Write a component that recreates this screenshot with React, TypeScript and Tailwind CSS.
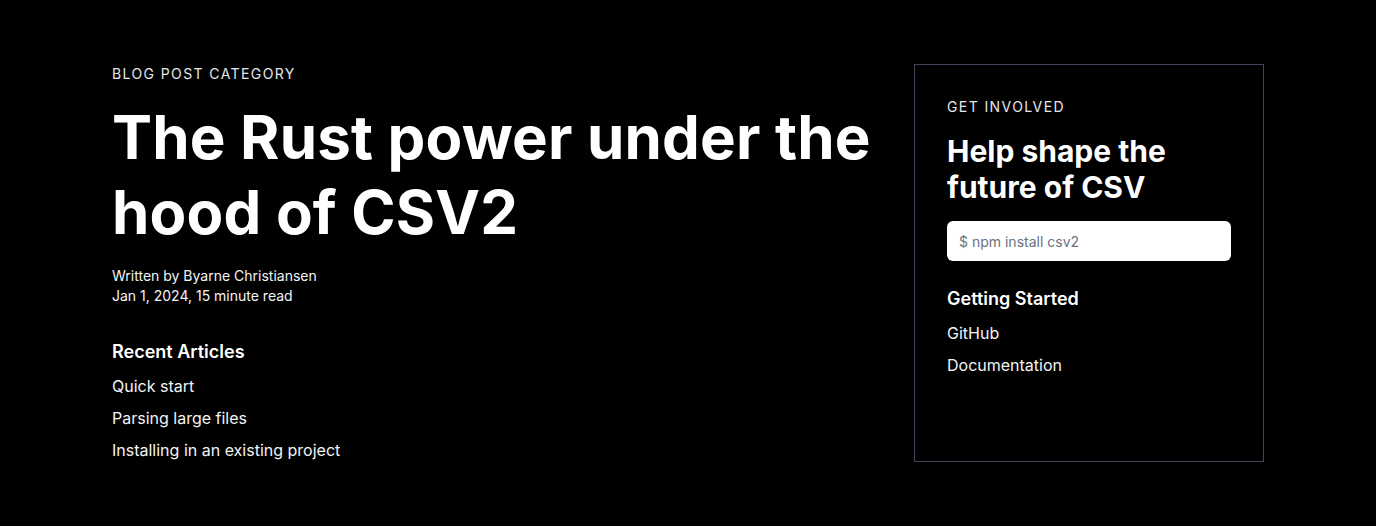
import React from "react";

const recent = ["Quick start", "Parsing large files", "Installing in an existing project"];
const started = ["GitHub", "Documentation"];

const App = () => {
  return (
    <div
      className="min-h-[526px] bg-black text-white"
      style={{ fontFamily: "Inter, 'Noto Sans', sans-serif" }}
    >
      <div className="mx-auto flex max-w-7xl gap-8 px-16 py-16">
        <div className="flex-1">
          <p className="text-sm leading-5 tracking-widest text-gray-200 uppercase">
            Blog post category
          </p>
          <h1 className="mt-4 text-6xl leading-tight font-bold tracking-[0.003em]">
            The Rust power under the hood of CSV2
          </h1>
          <div className="mt-4 text-sm leading-5 text-gray-100">
            <p>Written by Byarne Christiansen</p>
            <p>Jan 1, 2024, 15 minute read</p>
          </div>

          <h2 className="mt-8 text-lg leading-7 font-semibold">Recent Articles</h2>
          <ul className="mt-2 space-y-2">
            {recent.map((item) => (
              <li key={item}>
                <a href="#" className="text-base leading-6 text-gray-100">
                  {item}
                </a>
              </li>
            ))}
          </ul>
        </div>

        <div className="w-[350px] shrink-0 border border-[#45455a] p-8">
          <p className="text-sm leading-5 tracking-widest text-gray-200 uppercase">
            Get involved
          </p>
          <h2 className="mt-4 text-3xl leading-9 font-bold">
            Help shape the future of CSV
          </h2>
          <input
            type="text"
            placeholder="$ npm install csv2"
            className="mt-4 h-10 w-full rounded-md bg-white px-3 text-sm text-gray-900 placeholder:text-gray-500"
          />

          <h3 className="mt-6 text-lg leading-7 font-semibold">Getting Started</h3>
          <ul className="mt-2 space-y-2">
            {started.map((item) => (
              <li key={item}>
                <a href="#" className="text-base leading-6 text-gray-100">
                  {item}
                </a>
              </li>
            ))}
          </ul>
        </div>
      </div>
    </div>
  );
};

export default App;
